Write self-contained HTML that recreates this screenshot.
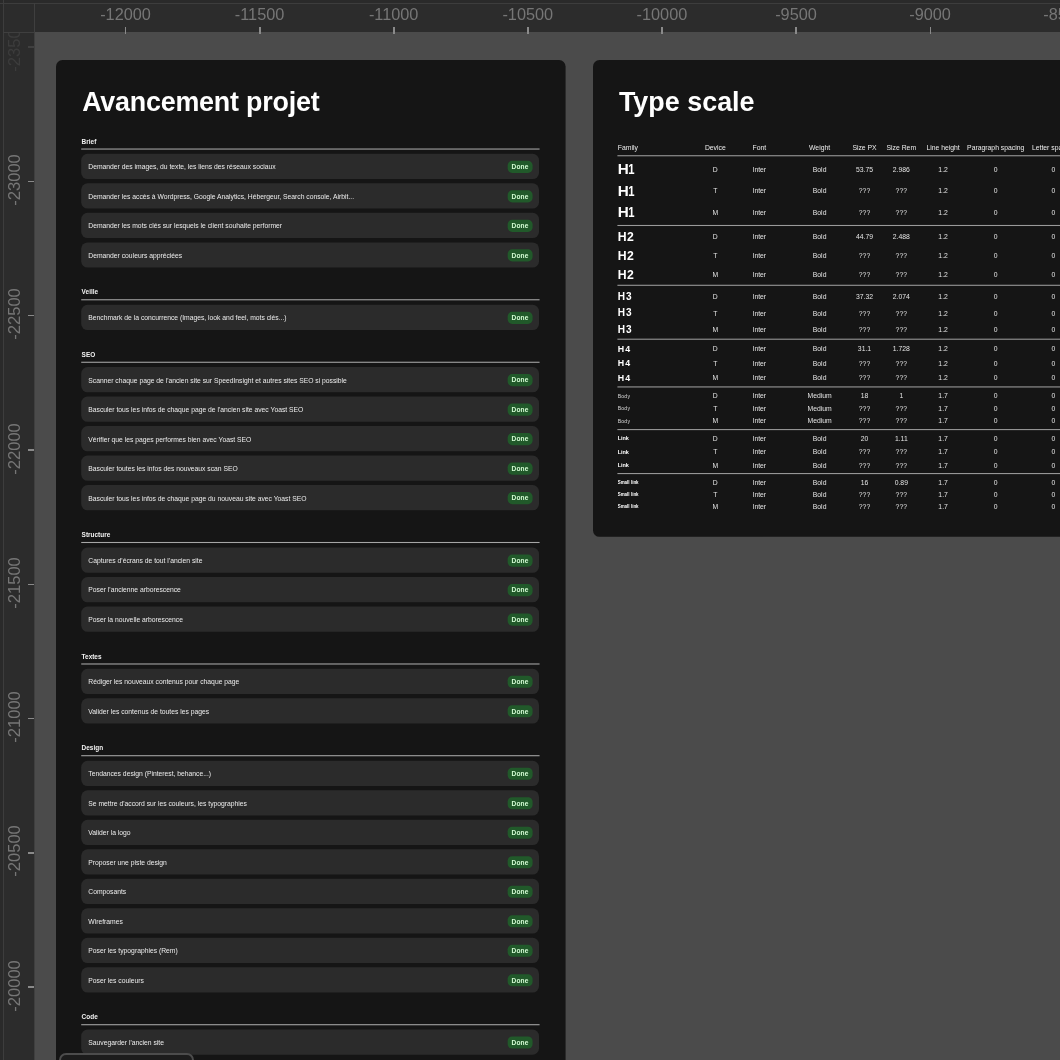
<!DOCTYPE html>
<html lang="fr"><head><meta charset="utf-8"><title>Avancement projet</title>
<style>
*{box-sizing:border-box;margin:0;padding:0}
html,body{width:1060px;height:1060px;overflow:hidden;background:#4b4b4b;font-family:"Liberation Sans", Arial, sans-serif;}
#app{position:relative;width:1060px;height:1060px;overflow:hidden;will-change:transform}
.card{position:absolute;transform-origin:0 0;transform:scale(0.2682);background:#151515;border-radius:24px;color:#fff}
.card>*,.row>*{position:absolute;white-space:nowrap}
.f i{display:inline-block;font-style:normal;transform:scaleX(.74);transform-origin:100% 50%}
h1{font-weight:700;font-size:100px;line-height:100px;letter-spacing:-0.7px;color:#fff}
.lbl{font-weight:700;font-size:24px;line-height:24px;color:#f2f2f2}
.ln{height:4px;background:#a6a6a6}
.row{height:94px;background:#2b2b2b;border-radius:24px;left:93.5px;width:1707.5px}
.row span{left:27px;top:36.5px;font-size:25.2px;line-height:25.2px;color:#ececec}
.row b{right:24.5px;top:26px;width:93px;height:45px;border-radius:17px;background:#21592a;color:#d4fcd4;font-size:24.5px;letter-spacing:0.4px;line-height:46px;text-align:center;font-weight:700}
.c{font-size:25.4px;line-height:26px;color:#e4e4e4;transform:translate(-50%,-50%)}
.f{font-weight:700;color:#fff;transform:translate(0,-50%);left:92px}
.hd{color:#ededed}
.rt{position:absolute;left:34px;top:3px;right:0;height:29px;background:#2c2c2c}
.rl{position:absolute;left:3px;top:32px;width:31px;bottom:0;background:#2c2c2c}
.num{position:absolute;font-size:16.3px;line-height:16px;color:#767676;white-space:nowrap}
.tk{position:absolute;background:#8a8a8a}
</style></head><body>
<div id="app">
<div class="card" style="left:56.4px;top:60.15px;width:1899.5px;height:4000px">
<h1 style="left:97.5px;top:104.9px">Avancement projet</h1>
<div class="lbl" style="left:95.5px;top:292.0px">Brief</div>
<div class="ln" style="left:93.5px;width:1709.5px;top:329.9px"></div>
<div class="row" style="top:350.3px"><span>Demander des images, du texte, les liens des réseaux sociaux</span><b>Done</b></div>
<div class="row" style="top:460.3px"><span>Demander les accès à Wordpress, Google Analytics, Hébergeur, Search console, Airbit...</span><b>Done</b></div>
<div class="row" style="top:570.3px"><span>Demander les mots clés sur lesquels le client souhaite performer</span><b>Done</b></div>
<div class="row" style="top:680.3px"><span>Demander couleurs appréciées</span><b>Done</b></div>
<div class="lbl" style="left:95.5px;top:854.4px">Veille</div>
<div class="ln" style="left:93.5px;width:1709.5px;top:892.3px"></div>
<div class="row" style="top:912.7px"><span>Benchmark de la concurrence (Images, look and feel, mots clés...)</span><b>Done</b></div>
<div class="lbl" style="left:95.5px;top:1086.9px">SEO</div>
<div class="ln" style="left:93.5px;width:1709.5px;top:1124.8px"></div>
<div class="row" style="top:1145.2px"><span>Scanner chaque page de l'ancien site sur SpeedInsight et autres sites SEO si possible</span><b>Done</b></div>
<div class="row" style="top:1255.2px"><span>Basculer tous les infos de chaque page de l'ancien site avec Yoast SEO</span><b>Done</b></div>
<div class="row" style="top:1365.2px"><span>Vérifier que les pages performes bien avec Yoast SEO</span><b>Done</b></div>
<div class="row" style="top:1475.2px"><span>Basculer toutes les infos des nouveaux scan SEO</span><b>Done</b></div>
<div class="row" style="top:1585.2px"><span>Basculer tous les infos de chaque page du nouveau site avec Yoast SEO</span><b>Done</b></div>
<div class="lbl" style="left:95.5px;top:1759.3px">Structure</div>
<div class="ln" style="left:93.5px;width:1709.5px;top:1797.2px"></div>
<div class="row" style="top:1817.6px"><span>Captures d'écrans de tout l'ancien site</span><b>Done</b></div>
<div class="row" style="top:1927.6px"><span>Poser l'ancienne arborescence</span><b>Done</b></div>
<div class="row" style="top:2037.6px"><span>Poser la nouvelle arborescence</span><b>Done</b></div>
<div class="lbl" style="left:95.5px;top:2211.8px">Textes</div>
<div class="ln" style="left:93.5px;width:1709.5px;top:2249.7px"></div>
<div class="row" style="top:2270.1px"><span>Rédiger les nouveaux contenus pour chaque page</span><b>Done</b></div>
<div class="row" style="top:2380.1px"><span>Valider les contenus de toutes les pages</span><b>Done</b></div>
<div class="lbl" style="left:95.5px;top:2554.2px">Design</div>
<div class="ln" style="left:93.5px;width:1709.5px;top:2592.1px"></div>
<div class="row" style="top:2612.5px"><span>Tendances design (Pinterest, behance...)</span><b>Done</b></div>
<div class="row" style="top:2722.5px"><span>Se mettre d'accord sur les couleurs, les typographies</span><b>Done</b></div>
<div class="row" style="top:2832.5px"><span>Valider la logo</span><b>Done</b></div>
<div class="row" style="top:2942.5px"><span>Proposer une piste design</span><b>Done</b></div>
<div class="row" style="top:3052.5px"><span>Composants</span><b>Done</b></div>
<div class="row" style="top:3162.5px"><span>Wireframes</span><b>Done</b></div>
<div class="row" style="top:3272.5px"><span>Poser les typographies (Rem)</span><b>Done</b></div>
<div class="row" style="top:3382.5px"><span>Poser les couleurs</span><b>Done</b></div>
<div class="lbl" style="left:95.5px;top:3556.7px">Code</div>
<div class="ln" style="left:93.5px;width:1709.5px;top:3594.6px"></div>
<div class="row" style="top:3615.0px"><span>Sauvegarder l'ancien site</span><b>Done</b></div>
</div>
<div class="card" style="left:592.7px;top:60.15px;width:2000px;height:1778px">
<h1 style="left:96.5px;letter-spacing:0.2px;top:103.9px">Type scale</h1>
<div class="c hd" style="left:92.5px;top:328.3px;transform:translate(0,-50%)">Family</div>
<div class="c hd" style="left:456.0px;top:328.3px">Device</div>
<div class="c hd" style="left:620.1px;top:328.3px">Font</div>
<div class="c hd" style="left:844.9px;top:328.3px">Weight</div>
<div class="c hd" style="left:1012.3px;top:328.3px">Size PX</div>
<div class="c hd" style="left:1149.5px;top:328.3px">Size Rem</div>
<div class="c hd" style="left:1305.4px;top:328.3px">Line height</div>
<div class="c hd" style="left:1501.5px;top:328.3px">Paragraph spacing</div>
<div class="c hd" style="left:1716.3px;top:328.3px">Letter spacing</div>
<div class="ln" style="left:91px;width:1910px;background:#9a9a9a;top:355.0px"></div>
<div class="ln" style="left:91px;width:1910px;background:#9a9a9a;top:614.9px"></div>
<div class="ln" style="left:91px;width:1910px;background:#9a9a9a;top:838.2px"></div>
<div class="ln" style="left:91px;width:1910px;background:#9a9a9a;top:1038.8px"></div>
<div class="ln" style="left:91px;width:1910px;background:#9a9a9a;top:1216.7px"></div>
<div class="ln" style="left:91px;width:1910px;background:#9a9a9a;top:1375.5px"></div>
<div class="ln" style="left:91px;width:1910px;background:#9a9a9a;top:1539.6px"></div>
<div class="f" style="font-size:56.8px;line-height:56.8px;letter-spacing:-8px;top:406.6px">H<i>1</i></div>
<div class="c" style="left:456.0px;top:406.6px">D</div>
<div class="c" style="left:620.1px;top:406.6px">Inter</div>
<div class="c" style="left:844.9px;top:406.6px">Bold</div>
<div class="c" style="left:1012.3px;top:406.6px">53.75</div>
<div class="c" style="left:1149.5px;top:406.6px">2.986</div>
<div class="c" style="left:1305.4px;top:406.6px">1.2</div>
<div class="c" style="left:1501.5px;top:406.6px">0</div>
<div class="c" style="left:1716.3px;top:406.6px">0</div>
<div class="f" style="font-size:56.8px;line-height:56.8px;letter-spacing:-8px;top:487.1px">H<i>1</i></div>
<div class="c" style="left:456.0px;top:487.1px">T</div>
<div class="c" style="left:620.1px;top:487.1px">Inter</div>
<div class="c" style="left:844.9px;top:487.1px">Bold</div>
<div class="c" style="left:1012.3px;top:487.1px">???</div>
<div class="c" style="left:1149.5px;top:487.1px">???</div>
<div class="c" style="left:1305.4px;top:487.1px">1.2</div>
<div class="c" style="left:1501.5px;top:487.1px">0</div>
<div class="c" style="left:1716.3px;top:487.1px">0</div>
<div class="f" style="font-size:56.8px;line-height:56.8px;letter-spacing:-8px;top:568.0px">H<i>1</i></div>
<div class="c" style="left:456.0px;top:568.0px">M</div>
<div class="c" style="left:620.1px;top:568.0px">Inter</div>
<div class="c" style="left:844.9px;top:568.0px">Bold</div>
<div class="c" style="left:1012.3px;top:568.0px">???</div>
<div class="c" style="left:1149.5px;top:568.0px">???</div>
<div class="c" style="left:1305.4px;top:568.0px">1.2</div>
<div class="c" style="left:1501.5px;top:568.0px">0</div>
<div class="c" style="left:1716.3px;top:568.0px">0</div>
<div class="f" style="font-size:45.5px;line-height:45.5px;letter-spacing:1.5px;top:659.8px">H2</div>
<div class="c" style="left:456.0px;top:659.8px">D</div>
<div class="c" style="left:620.1px;top:659.8px">Inter</div>
<div class="c" style="left:844.9px;top:659.8px">Bold</div>
<div class="c" style="left:1012.3px;top:659.8px">44.79</div>
<div class="c" style="left:1149.5px;top:659.8px">2.488</div>
<div class="c" style="left:1305.4px;top:659.8px">1.2</div>
<div class="c" style="left:1501.5px;top:659.8px">0</div>
<div class="c" style="left:1716.3px;top:659.8px">0</div>
<div class="f" style="font-size:45.5px;line-height:45.5px;letter-spacing:1.5px;top:730.2px">H2</div>
<div class="c" style="left:456.0px;top:730.2px">T</div>
<div class="c" style="left:620.1px;top:730.2px">Inter</div>
<div class="c" style="left:844.9px;top:730.2px">Bold</div>
<div class="c" style="left:1012.3px;top:730.2px">???</div>
<div class="c" style="left:1149.5px;top:730.2px">???</div>
<div class="c" style="left:1305.4px;top:730.2px">1.2</div>
<div class="c" style="left:1501.5px;top:730.2px">0</div>
<div class="c" style="left:1716.3px;top:730.2px">0</div>
<div class="f" style="font-size:45.5px;line-height:45.5px;letter-spacing:1.5px;top:799.6px">H2</div>
<div class="c" style="left:456.0px;top:799.6px">M</div>
<div class="c" style="left:620.1px;top:799.6px">Inter</div>
<div class="c" style="left:844.9px;top:799.6px">Bold</div>
<div class="c" style="left:1012.3px;top:799.6px">???</div>
<div class="c" style="left:1149.5px;top:799.6px">???</div>
<div class="c" style="left:1305.4px;top:799.6px">1.2</div>
<div class="c" style="left:1501.5px;top:799.6px">0</div>
<div class="c" style="left:1716.3px;top:799.6px">0</div>
<div class="f" style="font-size:37.5px;line-height:37.5px;letter-spacing:3.5px;top:882.7px">H3</div>
<div class="c" style="left:456.0px;top:882.7px">D</div>
<div class="c" style="left:620.1px;top:882.7px">Inter</div>
<div class="c" style="left:844.9px;top:882.7px">Bold</div>
<div class="c" style="left:1012.3px;top:882.7px">37.32</div>
<div class="c" style="left:1149.5px;top:882.7px">2.074</div>
<div class="c" style="left:1305.4px;top:882.7px">1.2</div>
<div class="c" style="left:1501.5px;top:882.7px">0</div>
<div class="c" style="left:1716.3px;top:882.7px">0</div>
<div class="f" style="font-size:37.5px;line-height:37.5px;letter-spacing:3.5px;top:943.5px">H3</div>
<div class="c" style="left:456.0px;top:943.5px">T</div>
<div class="c" style="left:620.1px;top:943.5px">Inter</div>
<div class="c" style="left:844.9px;top:943.5px">Bold</div>
<div class="c" style="left:1012.3px;top:943.5px">???</div>
<div class="c" style="left:1149.5px;top:943.5px">???</div>
<div class="c" style="left:1305.4px;top:943.5px">1.2</div>
<div class="c" style="left:1501.5px;top:943.5px">0</div>
<div class="c" style="left:1716.3px;top:943.5px">0</div>
<div class="f" style="font-size:37.5px;line-height:37.5px;letter-spacing:3.5px;top:1003.9px">H3</div>
<div class="c" style="left:456.0px;top:1003.9px">M</div>
<div class="c" style="left:620.1px;top:1003.9px">Inter</div>
<div class="c" style="left:844.9px;top:1003.9px">Bold</div>
<div class="c" style="left:1012.3px;top:1003.9px">???</div>
<div class="c" style="left:1149.5px;top:1003.9px">???</div>
<div class="c" style="left:1305.4px;top:1003.9px">1.2</div>
<div class="c" style="left:1501.5px;top:1003.9px">0</div>
<div class="c" style="left:1716.3px;top:1003.9px">0</div>
<div class="f" style="font-size:32.9px;line-height:32.9px;letter-spacing:4.5px;top:1077.0px">H4</div>
<div class="c" style="left:456.0px;top:1077.0px">D</div>
<div class="c" style="left:620.1px;top:1077.0px">Inter</div>
<div class="c" style="left:844.9px;top:1077.0px">Bold</div>
<div class="c" style="left:1012.3px;top:1077.0px">31.1</div>
<div class="c" style="left:1149.5px;top:1077.0px">1.728</div>
<div class="c" style="left:1305.4px;top:1077.0px">1.2</div>
<div class="c" style="left:1501.5px;top:1077.0px">0</div>
<div class="c" style="left:1716.3px;top:1077.0px">0</div>
<div class="f" style="font-size:32.9px;line-height:32.9px;letter-spacing:4.5px;top:1131.4px">H4</div>
<div class="c" style="left:456.0px;top:1131.4px">T</div>
<div class="c" style="left:620.1px;top:1131.4px">Inter</div>
<div class="c" style="left:844.9px;top:1131.4px">Bold</div>
<div class="c" style="left:1012.3px;top:1131.4px">???</div>
<div class="c" style="left:1149.5px;top:1131.4px">???</div>
<div class="c" style="left:1305.4px;top:1131.4px">1.2</div>
<div class="c" style="left:1501.5px;top:1131.4px">0</div>
<div class="c" style="left:1716.3px;top:1131.4px">0</div>
<div class="f" style="font-size:32.9px;line-height:32.9px;letter-spacing:4.5px;top:1185.1px">H4</div>
<div class="c" style="left:456.0px;top:1185.1px">M</div>
<div class="c" style="left:620.1px;top:1185.1px">Inter</div>
<div class="c" style="left:844.9px;top:1185.1px">Bold</div>
<div class="c" style="left:1012.3px;top:1185.1px">???</div>
<div class="c" style="left:1149.5px;top:1185.1px">???</div>
<div class="c" style="left:1305.4px;top:1185.1px">1.2</div>
<div class="c" style="left:1501.5px;top:1185.1px">0</div>
<div class="c" style="left:1716.3px;top:1185.1px">0</div>
<div class="f" style="font-weight:400;color:#d8d8d8;font-size:19.1px;line-height:19.1px;letter-spacing:0.8px;top:1252.6px">Body</div>
<div class="c" style="left:456.0px;top:1252.6px">D</div>
<div class="c" style="left:620.1px;top:1252.6px">Inter</div>
<div class="c" style="left:844.9px;top:1252.6px">Medium</div>
<div class="c" style="left:1012.3px;top:1252.6px">18</div>
<div class="c" style="left:1149.5px;top:1252.6px">1</div>
<div class="c" style="left:1305.4px;top:1252.6px">1.7</div>
<div class="c" style="left:1501.5px;top:1252.6px">0</div>
<div class="c" style="left:1716.3px;top:1252.6px">0</div>
<div class="f" style="font-weight:400;color:#d8d8d8;font-size:19.1px;line-height:19.1px;letter-spacing:0.8px;top:1300.0px">Body</div>
<div class="c" style="left:456.0px;top:1300.0px">T</div>
<div class="c" style="left:620.1px;top:1300.0px">Inter</div>
<div class="c" style="left:844.9px;top:1300.0px">Medium</div>
<div class="c" style="left:1012.3px;top:1300.0px">???</div>
<div class="c" style="left:1149.5px;top:1300.0px">???</div>
<div class="c" style="left:1305.4px;top:1300.0px">1.7</div>
<div class="c" style="left:1501.5px;top:1300.0px">0</div>
<div class="c" style="left:1716.3px;top:1300.0px">0</div>
<div class="f" style="font-weight:400;color:#d8d8d8;font-size:19.1px;line-height:19.1px;letter-spacing:0.8px;top:1346.2px">Body</div>
<div class="c" style="left:456.0px;top:1346.2px">M</div>
<div class="c" style="left:620.1px;top:1346.2px">Inter</div>
<div class="c" style="left:844.9px;top:1346.2px">Medium</div>
<div class="c" style="left:1012.3px;top:1346.2px">???</div>
<div class="c" style="left:1149.5px;top:1346.2px">???</div>
<div class="c" style="left:1305.4px;top:1346.2px">1.7</div>
<div class="c" style="left:1501.5px;top:1346.2px">0</div>
<div class="c" style="left:1716.3px;top:1346.2px">0</div>
<div class="f" style="font-size:20.5px;line-height:20.5px;letter-spacing:-0.3px;top:1411.4px">Link</div>
<div class="c" style="left:456.0px;top:1411.4px">D</div>
<div class="c" style="left:620.1px;top:1411.4px">Inter</div>
<div class="c" style="left:844.9px;top:1411.4px">Bold</div>
<div class="c" style="left:1012.3px;top:1411.4px">20</div>
<div class="c" style="left:1149.5px;top:1411.4px">1.11</div>
<div class="c" style="left:1305.4px;top:1411.4px">1.7</div>
<div class="c" style="left:1501.5px;top:1411.4px">0</div>
<div class="c" style="left:1716.3px;top:1411.4px">0</div>
<div class="f" style="font-size:20.5px;line-height:20.5px;letter-spacing:-0.3px;top:1461.4px">Link</div>
<div class="c" style="left:456.0px;top:1461.4px">T</div>
<div class="c" style="left:620.1px;top:1461.4px">Inter</div>
<div class="c" style="left:844.9px;top:1461.4px">Bold</div>
<div class="c" style="left:1012.3px;top:1461.4px">???</div>
<div class="c" style="left:1149.5px;top:1461.4px">???</div>
<div class="c" style="left:1305.4px;top:1461.4px">1.7</div>
<div class="c" style="left:1501.5px;top:1461.4px">0</div>
<div class="c" style="left:1716.3px;top:1461.4px">0</div>
<div class="f" style="font-size:20.5px;line-height:20.5px;letter-spacing:-0.3px;top:1511.0px">Link</div>
<div class="c" style="left:456.0px;top:1511.0px">M</div>
<div class="c" style="left:620.1px;top:1511.0px">Inter</div>
<div class="c" style="left:844.9px;top:1511.0px">Bold</div>
<div class="c" style="left:1012.3px;top:1511.0px">???</div>
<div class="c" style="left:1149.5px;top:1511.0px">???</div>
<div class="c" style="left:1305.4px;top:1511.0px">1.7</div>
<div class="c" style="left:1501.5px;top:1511.0px">0</div>
<div class="c" style="left:1716.3px;top:1511.0px">0</div>
<div class="f" style="font-size:16.5px;line-height:16.5px;letter-spacing:0.1px;top:1574.0px">Small link</div>
<div class="c" style="left:456.0px;top:1574.0px">D</div>
<div class="c" style="left:620.1px;top:1574.0px">Inter</div>
<div class="c" style="left:844.9px;top:1574.0px">Bold</div>
<div class="c" style="left:1012.3px;top:1574.0px">16</div>
<div class="c" style="left:1149.5px;top:1574.0px">0.89</div>
<div class="c" style="left:1305.4px;top:1574.0px">1.7</div>
<div class="c" style="left:1501.5px;top:1574.0px">0</div>
<div class="c" style="left:1716.3px;top:1574.0px">0</div>
<div class="f" style="font-size:16.5px;line-height:16.5px;letter-spacing:0.1px;top:1620.2px">Small link</div>
<div class="c" style="left:456.0px;top:1620.2px">T</div>
<div class="c" style="left:620.1px;top:1620.2px">Inter</div>
<div class="c" style="left:844.9px;top:1620.2px">Bold</div>
<div class="c" style="left:1012.3px;top:1620.2px">???</div>
<div class="c" style="left:1149.5px;top:1620.2px">???</div>
<div class="c" style="left:1305.4px;top:1620.2px">1.7</div>
<div class="c" style="left:1501.5px;top:1620.2px">0</div>
<div class="c" style="left:1716.3px;top:1620.2px">0</div>
<div class="f" style="font-size:16.5px;line-height:16.5px;letter-spacing:0.1px;top:1665.7px">Small link</div>
<div class="c" style="left:456.0px;top:1665.7px">M</div>
<div class="c" style="left:620.1px;top:1665.7px">Inter</div>
<div class="c" style="left:844.9px;top:1665.7px">Bold</div>
<div class="c" style="left:1012.3px;top:1665.7px">???</div>
<div class="c" style="left:1149.5px;top:1665.7px">???</div>
<div class="c" style="left:1305.4px;top:1665.7px">1.7</div>
<div class="c" style="left:1501.5px;top:1665.7px">0</div>
<div class="c" style="left:1716.3px;top:1665.7px">0</div>
</div>
<div style="position:absolute;left:0;top:0;width:1060px;height:3px;background:#2a2a2a"></div>
<div style="position:absolute;left:0;top:0;width:3px;height:1060px;background:#2a2a2a"></div>
<div class="rt">
<span class="num" style="left:91.5px;top:3.4px;transform:translateX(-50%)">-12000</span>
<i class="tk" style="left:90.9px;top:24px;width:1.5px;height:7px"></i>
<span class="num" style="left:225.6px;top:3.4px;transform:translateX(-50%)">-11500</span>
<i class="tk" style="left:225.0px;top:24px;width:1.5px;height:7px"></i>
<span class="num" style="left:359.7px;top:3.4px;transform:translateX(-50%)">-11000</span>
<i class="tk" style="left:359.1px;top:24px;width:1.5px;height:7px"></i>
<span class="num" style="left:493.8px;top:3.4px;transform:translateX(-50%)">-10500</span>
<i class="tk" style="left:493.2px;top:24px;width:1.5px;height:7px"></i>
<span class="num" style="left:627.9px;top:3.4px;transform:translateX(-50%)">-10000</span>
<i class="tk" style="left:627.3px;top:24px;width:1.5px;height:7px"></i>
<span class="num" style="left:762.0px;top:3.4px;transform:translateX(-50%)">-9500</span>
<i class="tk" style="left:761.4px;top:24px;width:1.5px;height:7px"></i>
<span class="num" style="left:896.1px;top:3.4px;transform:translateX(-50%)">-9000</span>
<i class="tk" style="left:895.5px;top:24px;width:1.5px;height:7px"></i>
<span class="num" style="left:1030.2px;top:3.4px;transform:translateX(-50%)">-8500</span>
<i class="tk" style="left:1029.6px;top:24px;width:1.5px;height:7px"></i>
</div>
<div class="rl">
<span class="num" style="left:11.6px;font-size:16.6px;top:13.7px;transform:translate(-50%,-50%) rotate(-90deg);opacity:.22">-23500</span>
<i class="tk" style="left:25px;top:14.4px;width:6px;height:1.5px;opacity:.22"></i>
<span class="num" style="left:11.6px;font-size:16.6px;top:148.0px;transform:translate(-50%,-50%) rotate(-90deg)">-23000</span>
<i class="tk" style="left:25px;top:148.7px;width:6px;height:1.5px"></i>
<span class="num" style="left:11.6px;font-size:16.6px;top:282.2px;transform:translate(-50%,-50%) rotate(-90deg)">-22500</span>
<i class="tk" style="left:25px;top:282.9px;width:6px;height:1.5px"></i>
<span class="num" style="left:11.6px;font-size:16.6px;top:416.5px;transform:translate(-50%,-50%) rotate(-90deg)">-22000</span>
<i class="tk" style="left:25px;top:417.2px;width:6px;height:1.5px"></i>
<span class="num" style="left:11.6px;font-size:16.6px;top:550.8px;transform:translate(-50%,-50%) rotate(-90deg)">-21500</span>
<i class="tk" style="left:25px;top:551.5px;width:6px;height:1.5px"></i>
<span class="num" style="left:11.6px;font-size:16.6px;top:685.0px;transform:translate(-50%,-50%) rotate(-90deg)">-21000</span>
<i class="tk" style="left:25px;top:685.7px;width:6px;height:1.5px"></i>
<span class="num" style="left:11.6px;font-size:16.6px;top:819.2px;transform:translate(-50%,-50%) rotate(-90deg)">-20500</span>
<i class="tk" style="left:25px;top:820.0px;width:6px;height:1.5px"></i>
<span class="num" style="left:11.6px;font-size:16.6px;top:953.5px;transform:translate(-50%,-50%) rotate(-90deg)">-20000</span>
<i class="tk" style="left:25px;top:954.2px;width:6px;height:1.5px"></i>
</div>
<div style="position:absolute;left:3px;top:3px;width:31px;height:29px;background:#2c2c2c"></div>
<div style="position:absolute;left:0;top:3px;width:1060px;height:1px;background:#3d3d3d"></div>
<div style="position:absolute;left:3px;top:0;width:1px;height:1060px;background:#3d3d3d"></div>
<div style="position:absolute;left:34px;top:3px;width:1px;height:1057px;background:#3f3f3f"></div>
<div style="position:absolute;left:3px;top:32px;width:32px;height:1px;background:#3f3f3f"></div>
<div style="position:absolute;left:59px;top:1053px;width:135px;height:20px;background:#1c1c1c;border:2px solid #4c4c4c;border-radius:7px"></div>
</div></body></html>
